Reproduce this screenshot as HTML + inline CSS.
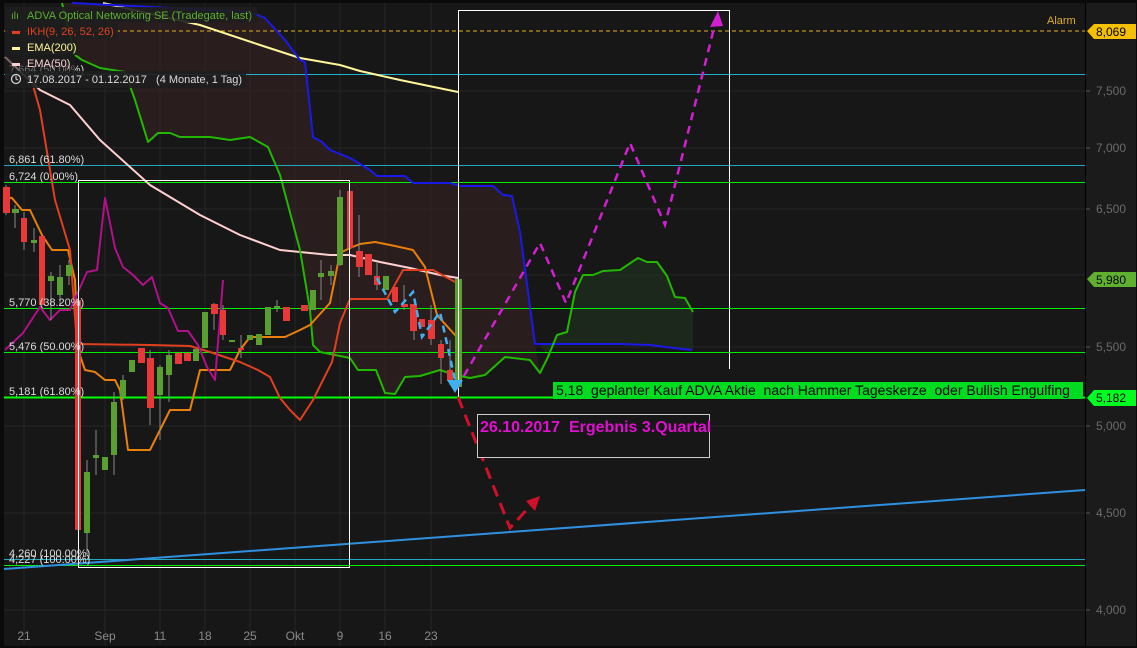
<!DOCTYPE html>
<html><head><meta charset="utf-8"><style>
html,body{margin:0;padding:0;background:#0c0c0c;}
svg{display:block;font-family:"Liberation Sans",sans-serif;}
text{white-space:pre;}
</style></head><body>
<svg width="1137" height="648" viewBox="0 0 1137 648" xmlns="http://www.w3.org/2000/svg" xml:space="preserve">
<rect x="0" y="0" width="1137" height="648" fill="#0a0a0a"/>
<rect x="4" y="3" width="1081" height="643" fill="#171717"/>
<rect x="1086" y="3" width="50" height="643" fill="#1b1b1b"/>
<line x1="1085.5" y1="3" x2="1085.5" y2="646" stroke="#000" stroke-width="1"/>
<g stroke="#252525" stroke-width="1">
<line x1="4" y1="91" x2="1085" y2="91"/><line x1="4" y1="148" x2="1085" y2="148"/><line x1="4" y1="209" x2="1085" y2="209"/>
<line x1="4" y1="275" x2="1085" y2="275"/><line x1="4" y1="347" x2="1085" y2="347"/><line x1="4" y1="426" x2="1085" y2="426"/>
<line x1="4" y1="513" x2="1085" y2="513"/><line x1="4" y1="610" x2="1085" y2="610"/>
<line x1="24" y1="3" x2="24" y2="646"/><line x1="105" y1="3" x2="105" y2="646"/><line x1="160" y1="3" x2="160" y2="646"/>
<line x1="205" y1="3" x2="205" y2="646"/><line x1="250" y1="3" x2="250" y2="646"/><line x1="295" y1="3" x2="295" y2="646"/>
<line x1="340" y1="3" x2="340" y2="646"/><line x1="385" y1="3" x2="385" y2="646"/><line x1="431" y1="3" x2="431" y2="646"/>
</g>
<polygon fill="#3a2222" fill-opacity="0.55" points="72,3 250,12 265,18 285,40 300,60 305,62 313,137 322,142 330,150 350,158 370,170 377,176 405,176 413,183 450,183 460,186 493,186 503,195 512,196 520,232 535,344 540,373 530,360 505,357 485,375 470,378 455,375 440,370 420,376 405,377 395,394 385,393 376,370 358,370 350,358 320,352 313,345 310,310 300,250 280,175 268,147 250,137 230,140 210,137 180,137 170,133 158,133 148,142 135,100 125,72 100,68 82,60 75,55 62,3"/>
<polygon fill="#1f3320" fill-opacity="0.6" points="540,344 548,357 557,335 567,332 575,292 583,275 593,275 603,271 620,270 638,258 647,262 657,262 667,276 675,297 685,298 693,312 693,350 665,347 650,345 620,344"/>
<line x1="4" y1="31" x2="1085" y2="31" stroke="#e0b020" stroke-width="1" stroke-dasharray="4,3"/>
<line x1="4" y1="74.5" x2="1085" y2="74.5" stroke="#20b0d0" stroke-width="1"/>
<line x1="4" y1="165.5" x2="1085" y2="165.5" stroke="#20a8c0" stroke-width="1"/>
<line x1="4" y1="182.5" x2="1085" y2="182.5" stroke="#00ee00" stroke-width="1"/>
<line x1="4" y1="308.5" x2="1085" y2="308.5" stroke="#00ee00" stroke-width="1"/>
<line x1="4" y1="352.5" x2="1085" y2="352.5" stroke="#00ee00" stroke-width="1"/>
<line x1="4" y1="397.5" x2="1085" y2="397.5" stroke="#00ff00" stroke-width="2"/>
<line x1="4" y1="559.5" x2="1085" y2="559.5" stroke="#20a8c0" stroke-width="1"/>
<line x1="4" y1="565.5" x2="1085" y2="565.5" stroke="#00ee00" stroke-width="1"/>
<g fill="none" stroke-width="2" stroke-linejoin="round">
<polyline stroke="#fff59a" points="103,3 200,25 260,45 300,58 340,65 360,71 400,80 458,92"/>
<polyline stroke="#1a1ae8" points="72,3 250,12 265,18 285,40 300,60 305,62 313,137 322,142 330,150 350,158 370,170 377,176 405,176 413,183 450,183 460,186 493,186 503,195 512,196 520,232 535,344 620,344 650,345 665,347 692,350"/>
<polyline stroke="#ffd0d0" points="5,57 40,90 70,105 100,140 150,185 200,215 240,235 280,250 330,255 350,255 380,262 410,268 440,275 458,278"/>
<polyline stroke="#22b800" points="62,3 75,55 82,60 100,68 125,72 135,100 148,142 158,133 170,133 180,137 210,137 230,140 250,137 268,147 280,175 300,250 310,310 313,345 320,352 350,358 358,370 376,370 385,393 395,394 405,377 420,376 440,370 455,375 470,378 485,375 505,357 530,360 540,373 548,357 557,335 567,332 575,292 583,275 593,275 603,271 620,270 638,258 647,262 657,262 667,276 675,297 685,298 693,312"/>
<polyline stroke="#e8800a" points="4,197 12,198 22,210 30,210 42,235 52,250 68,250 75,280 78,350 85,370 95,372 105,380 115,380 120,390 128,450 150,450 170,410 190,410 200,370 230,370 240,350 250,337 285,337 300,330 310,325 330,303 340,253 350,248 360,244 375,242 395,246 413,250 425,267 437,315 455,335 458,338"/>
<polyline stroke="#e04020" points="30,75 40,110 45,140 55,200 70,250 77,344 150,345 190,346 210,352 240,362 258,370 270,377 280,398 290,410 300,420 313,400 332,362 340,323 350,299 387,299 403,270 433,270 457,283"/>
<polyline stroke="#b0108a" points="5,350 23,333 40,307 50,320 60,310 70,310 87,272 97,270 105,198 115,248 123,267 133,275 143,285 152,277 160,303 168,308 178,331 188,331 198,345 207,367 215,380 223,280"/>
<line x1="4" y1="569" x2="1085" y2="490" stroke="#3090e0" stroke-width="2"/>
</g>
<g stroke="#888" stroke-width="1">
<line x1="6" y1="185" x2="6" y2="215"/><line x1="15" y1="205" x2="15" y2="228"/><line x1="24" y1="212" x2="24" y2="250"/><line x1="34" y1="228" x2="34" y2="252"/><line x1="51" y1="272" x2="51" y2="320"/><line x1="60" y1="265" x2="60" y2="305"/><line x1="69" y1="260" x2="69" y2="285"/><line x1="87" y1="460" x2="87" y2="555"/><line x1="96" y1="430" x2="96" y2="475"/><line x1="114" y1="392" x2="114" y2="475"/><line x1="123" y1="375" x2="123" y2="400"/><line x1="150" y1="350" x2="150" y2="425"/><line x1="160" y1="365" x2="160" y2="440"/><line x1="169" y1="350" x2="169" y2="402"/><line x1="214" y1="303" x2="214" y2="330"/><line x1="223" y1="305" x2="223" y2="340"/><line x1="241" y1="335" x2="241" y2="358"/><line x1="277" y1="300" x2="277" y2="312"/><line x1="321" y1="260" x2="321" y2="300"/><line x1="331" y1="265" x2="331" y2="285"/><line x1="340" y1="190" x2="340" y2="266"/><line x1="359" y1="215" x2="359" y2="277"/><line x1="377" y1="263" x2="377" y2="290"/><line x1="404" y1="285" x2="404" y2="310"/><line x1="414" y1="305" x2="414" y2="340"/><line x1="431" y1="305" x2="431" y2="345"/><line x1="441" y1="340" x2="441" y2="384"/><line x1="450" y1="340" x2="450" y2="385"/>
</g>
<g fill="#e83838">
<rect x="3" y="187" width="7" height="26"/><rect x="21" y="218" width="6" height="24"/><rect x="39" y="236" width="6" height="69"/><rect x="75" y="300" width="6" height="230"/><rect x="138" y="348" width="7" height="15"/><rect x="147" y="358" width="7" height="50"/><rect x="175" y="353" width="7" height="11"/><rect x="184" y="353" width="7" height="8"/><rect x="211" y="304" width="7" height="10"/><rect x="220" y="310" width="6" height="25"/><rect x="238" y="348" width="6" height="2"/><rect x="283" y="307" width="7" height="14"/><rect x="301" y="305" width="7" height="6"/><rect x="347" y="191" width="6" height="57"/><rect x="356" y="251" width="7" height="16"/><rect x="365" y="254" width="7" height="21"/><rect x="374" y="276" width="6" height="9"/><rect x="392" y="287" width="6" height="15"/><rect x="401" y="304" width="7" height="3"/><rect x="410" y="304" width="7" height="27"/><rect x="419" y="319" width="6" height="8"/><rect x="428" y="320" width="7" height="19"/><rect x="438" y="344" width="6" height="14"/><rect x="447" y="370" width="6" height="11"/></g>
<g fill="#5aa030">
<rect x="12" y="209" width="7" height="4"/><rect x="31" y="240" width="6" height="3"/><rect x="48" y="276" width="6" height="5"/><rect x="57" y="277" width="6" height="18"/><rect x="66" y="265" width="6" height="11"/><rect x="84" y="472" width="6" height="61"/><rect x="93" y="455" width="6" height="3"/><rect x="102" y="457" width="6" height="13"/><rect x="111" y="402" width="6" height="53"/><rect x="120" y="380" width="6" height="17"/><rect x="129" y="360" width="6" height="12"/><rect x="157" y="367" width="6" height="28"/><rect x="166" y="355" width="6" height="20"/><rect x="193" y="349" width="6" height="12"/><rect x="202" y="312" width="6" height="36"/><rect x="229" y="340" width="6" height="2"/><rect x="247" y="335" width="6" height="5"/><rect x="256" y="334" width="6" height="11"/><rect x="265" y="307" width="6" height="28"/><rect x="274" y="306" width="6" height="2"/><rect x="310" y="290" width="6" height="20"/><rect x="318" y="273" width="6" height="4"/><rect x="328" y="271" width="6" height="5"/><rect x="337" y="197" width="6" height="68"/><rect x="383" y="276" width="6" height="14"/><rect x="455" y="279" width="7" height="108"/></g>
<rect x="78.5" y="180.5" width="271" height="387" fill="none" stroke="#fff" stroke-width="1"/>
<g stroke="#fff" stroke-width="1">
<line x1="458.5" y1="10" x2="458.5" y2="397"/><line x1="458" y1="10.5" x2="730" y2="10.5"/><line x1="729.5" y1="10" x2="729.5" y2="369"/>
</g>
<g fill="none" stroke-width="2.5">
<polyline stroke="#d020d0" stroke-dasharray="8,6" points="457,388 540,243 566,303 630,143 665,225 716,20"/>
<polyline stroke="#d0102a" stroke-dasharray="12,7" stroke-width="3" points="458,397 510,528 532,504"/>
<polyline stroke="#40b0f0" stroke-dasharray="7,5" points="377,278 395,312 413,292 422,337 440,312 455,380"/>
</g>
<polygon fill="#d020d0" points="718,11 710,27 723,26"/>
<polygon fill="#d0102a" points="540,496 526,501 535,511"/>
<polygon fill="#40b0f0" points="455,393 447,380 463,380"/>
<g font-size="11" fill="#dcdcdc">
<text x="9" y="73">7,664 (50.00%)</text>
<text x="9" y="163">6,861 (61.80%)</text>
<text x="9" y="180">6,724 (0.00%)</text>
<text x="9" y="306">5,770 (38.20%)</text>
<text x="9" y="350">5,476 (50.00%)</text>
<text x="9" y="395">5,181 (61.80%)</text>
<text x="9" y="557">4,260 (100.00%)</text>
<text x="9" y="563">4,227 (100.00%)</text>
</g>
<rect x="5" y="7" width="252" height="16" fill="#1e1e1e" fill-opacity="0.9"/>
<rect x="5" y="23" width="113" height="16" fill="#1e1e1e" fill-opacity="0.9"/>
<rect x="5" y="39" width="72" height="16" fill="#1e1e1e" fill-opacity="0.9"/>
<rect x="5" y="55" width="70" height="16" fill="#1e1e1e" fill-opacity="0.6"/>
<rect x="5" y="71" width="241" height="17" fill="#1e1e1e" fill-opacity="0.9"/>
<g font-size="11">
<text x="11" y="19" fill="#5ab030" font-size="10">ılı</text>
<text x="27" y="19" fill="#5ab030">ADVA Optical Networking SE (Tradegate, last)</text>
<rect x="12" y="31" width="8" height="3" fill="#e04020"/><text x="27" y="35" fill="#e04020">IKH(9, 26, 52, 26)</text>
<rect x="12" y="47" width="8" height="3" fill="#fff59a"/><text x="27" y="51" fill="#fff59a">EMA(200)</text>
<rect x="12" y="63" width="8" height="3" fill="#ffd0d0"/><text x="27" y="67" fill="#ffd0d0">EMA(50)</text>
<circle cx="16" cy="79" r="4.5" fill="none" stroke="#ddd" stroke-width="1.2"/><polyline points="16,76 16,79 18,80" fill="none" stroke="#ddd" stroke-width="1"/>
<text x="27" y="83" fill="#dcdcdc">17.08.2017 - 01.12.2017   (4 Monate, 1 Tag)</text>
</g>
<rect x="553" y="382" width="530" height="17" fill="#00dd20"/>
<text x="556" y="395" font-size="14" fill="#000">5,18  geplanter Kauf ADVA Aktie  nach Hammer Tageskerze  oder Bullish Engulfing</text>
<rect x="477.5" y="414.5" width="232" height="43" fill="#171717" stroke="#ccc" stroke-width="1"/>
<text x="480" y="432" font-size="16" font-weight="bold" fill="#e010d0">26.10.2017  Ergebnis 3.Quartal</text>
<text x="1047" y="24" font-size="11" fill="#e0b020">Alarm</text>
<g font-size="12" fill="#6a6a6a">
<text x="1096" y="95">7,500</text><text x="1096" y="152">7,000</text><text x="1096" y="213">6,500</text>
<text x="1096" y="351">5,500</text><text x="1096" y="430">5,000</text><text x="1096" y="517">4,500</text><text x="1096" y="614">4,000</text>
</g>
<g stroke="#555"><line x1="1086" y1="91" x2="1090" y2="91"/><line x1="1086" y1="148" x2="1090" y2="148"/><line x1="1086" y1="209" x2="1090" y2="209"/><line x1="1086" y1="347" x2="1090" y2="347"/><line x1="1086" y1="426" x2="1090" y2="426"/><line x1="1086" y1="513" x2="1090" y2="513"/><line x1="1086" y1="610" x2="1090" y2="610"/></g>
<polygon fill="#f5c000" points="1087,31 1094,24 1136,24 1136,39 1094,39"/>
<text x="1096" y="36" font-size="12" fill="#000">8,069</text>
<polygon fill="#60b030" points="1087,279 1094,272 1136,272 1136,287 1094,287"/>
<text x="1096" y="284" font-size="12" fill="#000">5,980</text>
<polygon fill="#00ff20" points="1087,398 1094,390 1136,390 1136,406 1094,406"/>
<text x="1096" y="402" font-size="12" fill="#000">5,182</text>
<g font-size="12" fill="#8a8a8a" text-anchor="middle">
<text x="24" y="640">21</text><text x="105" y="640">Sep</text><text x="160" y="640">11</text><text x="205" y="640">18</text><text x="250" y="640">25</text><text x="295" y="640">Okt</text><text x="340" y="640">9</text><text x="385" y="640">16</text><text x="431" y="640">23</text>
</g>
</svg>
</body></html>
